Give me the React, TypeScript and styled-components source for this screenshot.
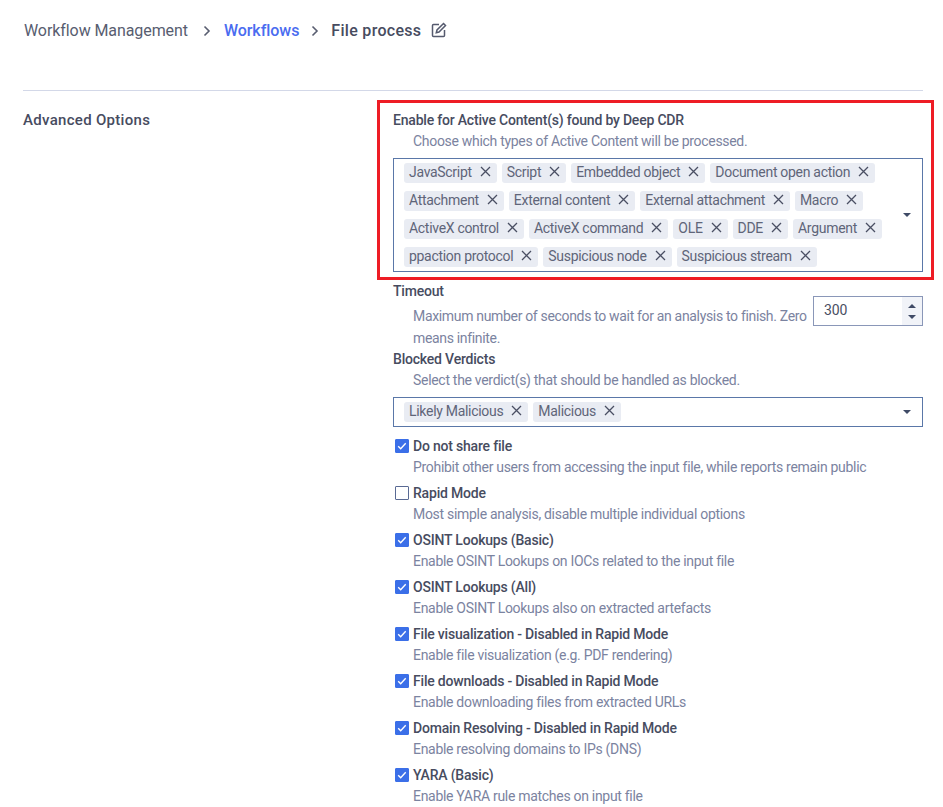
import React from "react";
import styled, { createGlobalStyle } from "styled-components";

const Global = createGlobalStyle`
  html, body { margin: 0; padding: 0; background: #fff; overflow: hidden; height: 807px; }
  body { font-family: Roboto, "Liberation Sans", sans-serif; color: #4a4f63; }
  * { box-sizing: border-box; }
`;

const Page = styled.div`
  padding: 0 20px 0 23px;
`;
const Breadcrumb = styled.nav`
  height: 90px;
  padding: 20px 0 0 1px;
  display: flex;
  align-items: flex-start;
  font-size: 16px;
  line-height: 21px;
`;
const Crumb = styled.span<{ $tone: "muted" | "link" | "current" }>`
  color: ${(p) => (p.$tone === "link" ? "#4a6cf0" : p.$tone === "current" ? "#474c5f" : "#585d70")};
  font-weight: ${(p) => (p.$tone === "muted" ? 400 : 500)};
  letter-spacing: ${(p) => (p.$tone === "current" ? "0.3px" : p.$tone === "link" ? "-0.05px" : "-0.08px")};
`;
const Sep = styled.svg<{ $left: number; $right: number }>`
  width: 8px;
  height: 12px;
  margin: 5px ${(p) => p.$right}px 0 ${(p) => p.$left}px;
  color: #585d70;
`;
const EditIcon = styled.svg`
  width: 16px;
  height: 16px;
  margin: 2px 0 0 10px;
  color: #555a6e;
`;
const Section = styled.section`
  border-top: 1px solid #d3d8e8;
  display: grid;
  grid-template-columns: 370px 530px;
  padding-top: 19px;
`;
const SectionTitle = styled.h3`
  margin: 0;
  font-size: 15px;
  font-weight: 500;
  line-height: 20px;
  letter-spacing: 0.3px;
  color: #474c5f;
`;
const Fields = styled.div`
  display: flex;
  flex-direction: column;
`;
const Highlight = styled.div`
  border: 3px solid #ee1c25;
  margin: -10px -11px 0 -16px;
  padding: 7px 8px 5px 13px;
  height: 180px;
`;
const Label = styled.div`
  font-size: 14px;
  font-weight: 500;
  line-height: 20px;
  letter-spacing: -0.2px;
  color: #474c5f;
`;
const Desc = styled.div`
  margin-left: 20px;
  font-size: 14px;
  line-height: 22px;
  letter-spacing: -0.3px;
  color: #7b83a0;
`;
const Select = styled.div`
  margin-top: 6px;
  border: 1px solid #5a77a8;
  padding: 0 40px 0 10px;
  position: relative;
  display: flex;
  flex-wrap: wrap;
  column-gap: 5px;
  min-height: 30px;
`;
const Tag = styled.span`
  height: 20px;
  margin: 4px 0;
  padding: 0 6px 3px 5px;
  border-radius: 3px;
  background: #e9ecf3;
  display: inline-flex;
  align-items: center;
  gap: 8px;
  font-size: 14px;
  letter-spacing: -0.3px;
  color: #5f6579;
  white-space: nowrap;
`;
const Close = styled.svg`
  width: 11px;
  height: 11px;
  color: #4a4f63;
`;
const Caret = styled.span`
  position: absolute;
  right: 11px;
  top: 50%;
  margin-top: -2px;
  border-left: 4px solid transparent;
  border-right: 4px solid transparent;
  border-top: 4px solid #3f4a66;
`;
const TimeoutField = styled.div`
  margin-top: 1px;
  display: flex;
  flex-direction: column;
`;
const TimeoutRow = styled.div`
  display: flex;
  align-items: flex-start;
  justify-content: space-between;
`;
const TimeoutDesc = styled(Desc)`
  width: 400px;
  margin-top: 4px;
  letter-spacing: -0.33px;
`;
const NumberBox = styled.div`
  width: 110px;
  height: 30px;
  margin-top: -5px;
  border: 1px solid #8a97b8;
  display: flex;
  justify-content: space-between;
  font-size: 14px;
  letter-spacing: -0.1px;
  line-height: 26px;
  padding-left: 10px;
  color: #4a4f63;
`;
const Spinner = styled.div`
  width: 20px;
  background: #f1f3f8;
  display: flex;
  flex-direction: column;
  align-items: center;
  justify-content: center;
  gap: 7px;
`;
const Arrow = styled.span<{ $up?: boolean }>`
  border-left: 4px solid transparent;
  border-right: 4px solid transparent;
  ${(p) => (p.$up ? "border-bottom: 4px solid #3f4a66;" : "border-top: 4px solid #3f4a66;")}
`;
const Blocked = styled.div`
  margin-top: 0;
`;
const Options = styled.div`
  margin-top: 9px;
  display: flex;
  flex-direction: column;
`;
const Option = styled.div`
  height: 47px;
`;
const OptionHead = styled.div`
  display: flex;
  align-items: center;
  gap: 4px;
  height: 20px;
  padding-left: 2px;
`;
const Box = styled.span<{ $on: boolean }>`
  width: 14px;
  height: 14px;
  border-radius: 1px;
  border: 1px solid ${(p) => (p.$on ? "#3b6fe8" : "#5a6a94")};
  background: ${(p) => (p.$on ? "#3b6fe8" : "#fff")};
  display: inline-flex;
  align-items: center;
  justify-content: center;
`;
const Check = styled.svg`
  width: 10px;
  height: 10px;
  color: #fff;
`;

const X = () => (
  <Close viewBox="0 0 11 11" fill="none" stroke="currentColor" strokeWidth="1.3">
    <path d="M1 1l9 9M10 1l-9 9" />
  </Close>
);

const tags = [
  "JavaScript", "Script", "Embedded object", "Document open action", "Attachment", "External content",
  "External attachment", "Macro", "ActiveX control", "ActiveX command", "OLE", "DDE", "Argument",
  "ppaction protocol", "Suspicious node", "Suspicious stream",
];

const options: [string, string, boolean][] = [
  ["Do not share file", "Prohibit other users from accessing the input file, while reports remain public", true],
  ["Rapid Mode", "Most simple analysis, disable multiple individual options", false],
  ["OSINT Lookups (Basic)", "Enable OSINT Lookups on IOCs related to the input file", true],
  ["OSINT Lookups (All)", "Enable OSINT Lookups also on extracted artefacts", true],
  ["File visualization - Disabled in Rapid Mode", "Enable file visualization (e.g. PDF rendering)", true],
  ["File downloads - Disabled in Rapid Mode", "Enable downloading files from extracted URLs", true],
  ["Domain Resolving - Disabled in Rapid Mode", "Enable resolving domains to IPs (DNS)", true],
  ["YARA (Basic)", "Enable YARA rule matches on input file", true],
];

export default function App() {
  return (
    <Page>
      <Global />
      <Breadcrumb>
        <Crumb $tone="muted">Workflow Management</Crumb>
        <Sep $left={15} $right={13} viewBox="0 0 8 12" fill="none" stroke="currentColor" strokeWidth="1.6"><path d="M1.5 1.5L6 6l-4.5 4.5" /></Sep>
        <Crumb $tone="link">Workflows</Crumb>
        <Sep $left={12} $right={12} viewBox="0 0 8 12" fill="none" stroke="currentColor" strokeWidth="1.6"><path d="M1.5 1.5L6 6l-4.5 4.5" /></Sep>
        <Crumb $tone="current">File process</Crumb>
        <EditIcon viewBox="0 0 16 16" fill="none" stroke="currentColor" strokeWidth="1.5">
          <path d="M8 2.5H2.5a1 1 0 0 0-1 1v10a1 1 0 0 0 1 1h10a1 1 0 0 0 1-1V8" />
          <path d="M12.5 1.5l2 2L8 10l-2.7.7L6 8z" />
        </EditIcon>
      </Breadcrumb>
      <Section>
        <SectionTitle>Advanced Options</SectionTitle>
        <Fields>
          <Highlight>
            <Label>Enable for Active Content(s) found by Deep CDR</Label>
            <Desc>Choose which types of Active Content will be processed.</Desc>
            <Select>
              {tags.map((t) => (
                <Tag key={t}>{t}<X /></Tag>
              ))}
              <Caret />
            </Select>
          </Highlight>
          <TimeoutField>
            <Label>Timeout</Label>
            <TimeoutRow>
              <TimeoutDesc>Maximum number of seconds to wait for an analysis to finish. Zero means infinite.</TimeoutDesc>
              <NumberBox>300<Spinner><Arrow $up /><Arrow /></Spinner></NumberBox>
            </TimeoutRow>
          </TimeoutField>
          <Blocked>
            <Label>Blocked Verdicts</Label>
            <Desc>Select the verdict(s) that should be handled as blocked.</Desc>
            <Select>
              <Tag>Likely Malicious<X /></Tag>
              <Tag>Malicious<X /></Tag>
              <Caret />
            </Select>
          </Blocked>
          <Options>
            {options.map(([l, d, on]) => (
              <Option key={l}>
                <OptionHead>
                  <Box $on={on}>
                    {on && (
                      <Check viewBox="0 0 10 10" fill="none" stroke="currentColor" strokeWidth="1.4"><path d="M1.2 5.2l2.5 2.5 5-5.4" /></Check>
                    )}
                  </Box>
                  <Label>{l}</Label>
                </OptionHead>
                <Desc>{d}</Desc>
              </Option>
            ))}
          </Options>
        </Fields>
      </Section>
    </Page>
  );
}
